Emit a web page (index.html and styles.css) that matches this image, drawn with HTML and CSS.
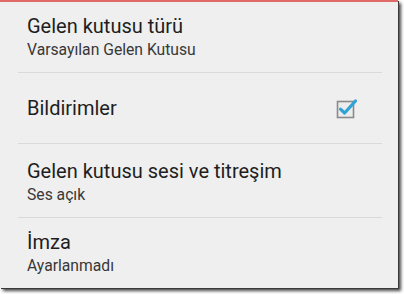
FILE: index.html
```html
<!DOCTYPE html>
<html lang="tr">
<head>
<meta charset="utf-8">
<link rel="stylesheet" href="styles.css">
</head>
<body>
<div class="screen">
  <div class="topbar"></div>
  <div class="list">
    <div class="row r1">
      <div class="texts">
        <div class="title">Gelen kutusu türü</div>
        <div class="sub">Varsayılan Gelen Kutusu</div>
      </div>
    </div>
    <div class="row r2">
      <div class="texts">
        <div class="title">Bildirimler</div>
      </div>
      <svg class="check" width="24" height="24" viewBox="0 0 24 24">
        <rect x="2.5" y="5.5" width="16" height="16" fill="#ececec" stroke="#8a8a8a" stroke-width="1.6"/>
        <path d="M5.5 13.2 L9.6 17 L20.5 5" fill="none" stroke="#2ea3d6" stroke-width="3.2" stroke-linecap="round" stroke-linejoin="round"/>
      </svg>
    </div>
    <div class="row r3">
      <div class="texts">
        <div class="title">Gelen kutusu sesi ve titreşim</div>
        <div class="sub">Ses açık</div>
      </div>
    </div>
    <div class="row r4">
      <div class="texts">
        <div class="title">İmza</div>
        <div class="sub">Ayarlanmadı</div>
      </div>
    </div>
  </div>
</div>
</body>
</html>
```
FILE: styles.css
```css
html, body {
  margin: 0;
  padding: 0;
  background: #ffffff;
}
body {
  width: 404px;
  height: 294px;
  overflow: hidden;
  font-family: Roboto, "Noto Sans", sans-serif;
}
.screen {
  width: 398px;
  height: 288px;
  background: #efefef;
  box-shadow: 1px 1px 0 #3a3a3a, 3px 3px 3px rgba(40, 40, 40, 0.85);
  display: flex;
  flex-direction: column;
  overflow: hidden;
}
.topbar {
  height: 2px;
  background: #e06a66;
  flex: none;
}
.list {
  margin: 0 16px 0 18px;
  display: flex;
  flex-direction: column;
}
.row {
  display: flex;
  align-items: center;
  justify-content: space-between;
  padding-left: 9px;
  border-bottom: 1px solid #dadada;
  box-sizing: border-box;
}
.r1 { height: 71px; padding-top: 2px; }
.r2 { height: 71px; padding-right: 23px; }
.r3 { height: 74px; padding-top: 4px; }
.r4 { height: 70px; padding-top: 2px; border-bottom: none; }
.title {
  font-size: 20px;
  line-height: 23px;
  color: #1e1e1e;
}
.sub {
  font-size: 15.7px;
  line-height: 23px;
  color: #383838;
}
.check {
  flex: none;
  margin-top: 0;
}
```
